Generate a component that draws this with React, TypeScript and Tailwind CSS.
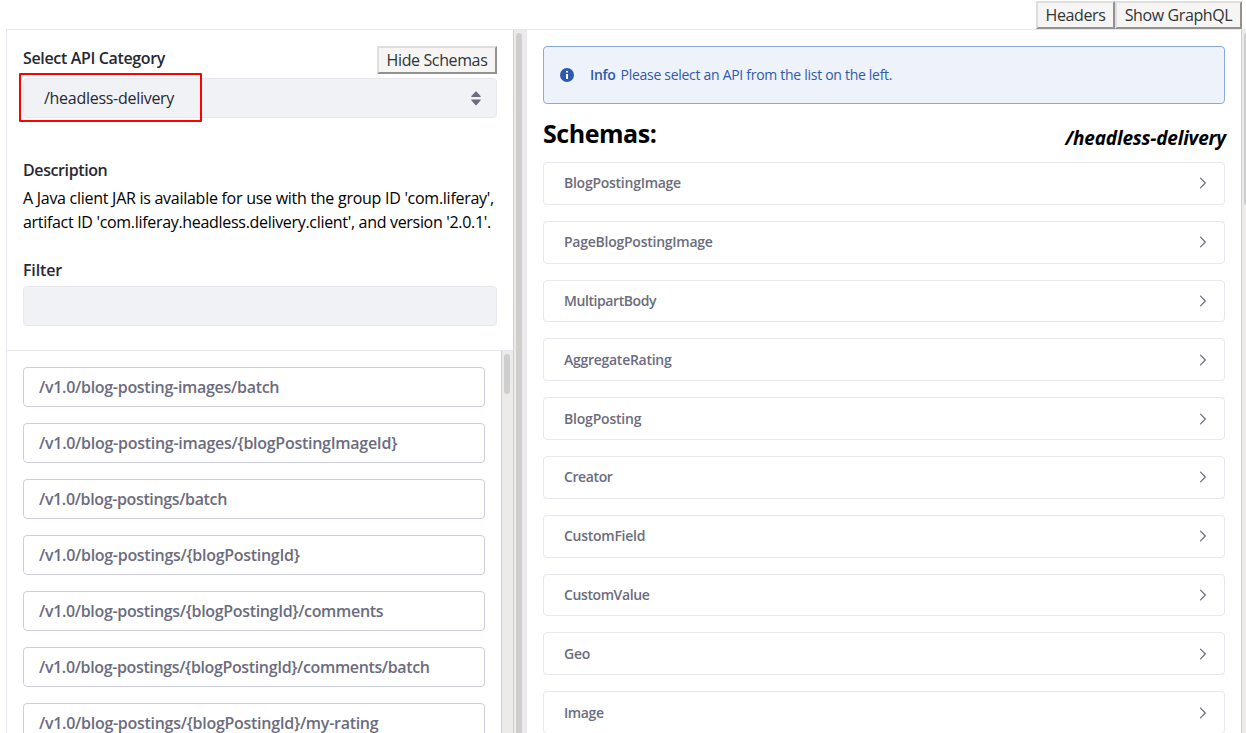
import type { ReactNode } from 'react';

const paths = [
  { name: '/v1.0/blog-posting-images/batch', tracking: 'tracking-[-0.29px]' },
  { name: '/v1.0/blog-posting-images/{blogPostingImageId}', tracking: 'tracking-[-0.27px]' },
  { name: '/v1.0/blog-postings/batch', tracking: 'tracking-[-0.36px]' },
  { name: '/v1.0/blog-postings/{blogPostingId}', tracking: 'tracking-[-0.29px]' },
  { name: '/v1.0/blog-postings/{blogPostingId}/comments', tracking: 'tracking-[-0.33px]' },
  { name: '/v1.0/blog-postings/{blogPostingId}/comments/batch', tracking: 'tracking-[-0.36px]' },
  { name: '/v1.0/blog-postings/{blogPostingId}/my-rating', tracking: 'tracking-[-0.28px]' },
];

const schemas = [
  { name: 'BlogPostingImage', tracking: 'tracking-[-0.26px]' },
  { name: 'PageBlogPostingImage', tracking: 'tracking-[-0.25px]' },
  { name: 'MultipartBody', tracking: 'tracking-[-0.42px]' },
  { name: 'AggregateRating', tracking: 'tracking-[-0.27px]' },
  { name: 'BlogPosting', tracking: 'tracking-[-0.2px]' },
  { name: 'Creator', tracking: 'tracking-[-0.4px]' },
  { name: 'CustomField', tracking: 'tracking-[-0.27px]' },
  { name: 'CustomValue', tracking: 'tracking-[-0.4px]' },
  { name: 'Geo', tracking: 'tracking-[-0.25px]' },
  { name: 'Image', tracking: 'tracking-[-0.4px]' },
];

function NativeButton({ children, width }: { children: ReactNode; width: string }) {
  return (
    <button
      className={`${width} flex h-7 shrink-0 items-center justify-center whitespace-nowrap border-2 border-t-[#dedede] border-r-[#929292] border-b-[#929292] border-l-[#dedede] bg-[#f6f5f4] text-base leading-6 tracking-[-0.38px] text-[#2e3436]`}
    >
      {children}
    </button>
  );
}

function Chevron() {
  return (
    <svg className="h-3 w-2" viewBox="0 0 8 12" fill="none" stroke="#6b6c7e" strokeWidth="1.2" strokeLinecap="round" strokeLinejoin="round">
      <path d="M1.5 1.2 6.3 6 1.5 10.8" />
    </svg>
  );
}

export default function App() {
  return (
    <div className="flex h-[733px] w-[1246px] flex-col overflow-hidden bg-white font-['Open_Sans','Noto_Sans',sans-serif] text-base text-black">
      <header className="flex h-[29px] shrink-0 justify-end pt-px pr-1">
        <NativeButton width="w-[79px]">Headers</NativeButton>
        <NativeButton width="w-[127px]">Show GraphQL</NativeButton>
      </header>

      <main className="ml-1.5 flex min-h-0 flex-1 border-t border-l border-[#e7e7ed]">
        <section className="flex w-[506px] shrink-0 flex-col">
          <div className="h-[321px] shrink-0 border-b border-[#e7e7ed] px-4 pt-4">
            <div className="flex h-8 justify-between">
              <h2 className="font-semibold leading-6 tracking-[-0.35px] text-[#272833]">Select API Category</h2>
              <NativeButton width="w-[120px]">Hide Schemas</NativeButton>
            </div>
            <div className="relative flex h-10 w-[474px] items-center justify-between rounded border border-[#e7e7ed] bg-[#f1f2f5] pr-[15px] pl-5 text-[#272833]">
              <span className="tracking-[-0.28px]">/headless-delivery</span>
              <svg className="h-[15px] w-[10px]" viewBox="0 0 10 15" fill="#6b6c7e">
                <path d="M.5 5.1c-.5.6-.3 1 .3 1h8.4c.6 0 .8-.4.3-1L5.6.8a.8.8 0 0 0-1.2 0zM.5 9.6c-.5-.6-.3-1 .3-1h8.4c.6 0 .8.4.3 1l-3.9 4.3a.8.8 0 0 1-1.2 0z" />
              </svg>
              <div className="absolute -top-1.5 -left-[5px] h-[49px] w-[183px] rounded-[1px] border-2 border-[#ff0000]" />
            </div>
            <h2 className="mt-10 font-semibold leading-6 tracking-[-0.4px] text-[#272833]">Description</h2>
            <p className="mt-1 whitespace-nowrap leading-6 tracking-[-0.27px]">
              A Java client JAR is available for use with the group ID 'com.liferay',
              <br />
              <span className="tracking-[-0.31px]">artifact ID 'com.liferay.headless.delivery.client', and version '2.0.1'.</span>
            </p>
            <h2 className="mt-6 font-semibold leading-6 tracking-[-0.15px] text-[#272833]">Filter</h2>
            <input aria-label="Filter" className="mt-1 block h-10 w-[474px] rounded border border-[#e7e7ed] bg-[#f1f2f5]" />
          </div>
          <div className="flex min-h-0 flex-1">
            <div className="flex w-[494px] shrink-0 flex-col gap-4 overflow-hidden px-4 pt-4">
              {paths.map(({ name, tracking }) => (
                <div
                  key={name}
                  className={`${tracking} flex h-10 shrink-0 items-center whitespace-nowrap rounded border border-[#cdced9] px-[15px] font-semibold text-[#6b6c7e]`}
                >
                  {name}
                </div>
              ))}
            </div>
            <div className="w-3 shrink-0 border-l border-[#cfcfce] bg-[#edebe9] pt-[3px] pl-0.5">
              <div className="h-10 w-1.5 rounded-full bg-[#cecece]" />
            </div>
          </div>
        </section>

        <div className="w-[13px] shrink-0 border-l border-[#cfcfce] bg-[#edebe9] pt-[3px] pl-0.5">
          <div className="h-full w-1.5 rounded-t-full bg-[#cecece]" />
        </div>

        <section className="flex w-[715px] shrink-0 flex-col border-l border-[#e7e7ed] px-4 pt-4">
          <div className="flex h-[58px] shrink-0 items-center rounded border border-[#89a7e0] bg-[#eef2fa] px-4 text-sm text-[#2e5aac]">
            <svg className="h-3.5 w-3.5" viewBox="0 0 14 14">
              <circle cx="7" cy="7" r="7" fill="#2e5aac" />
              <circle cx="7" cy="3.8" r="1" fill="white" />
              <path d="M6 6h2v5H6z" fill="white" />
            </svg>
            <span className="ml-4 font-semibold tracking-[-0.3px]">Info</span>
            <span className="ml-[5px] tracking-[-0.29px]">Please select an API from the list on the left.</span>
          </div>
          <div className="flex h-[58px] shrink-0 items-center justify-between">
            <h1 className="pt-0.5 text-[25px] font-bold tracking-[-0.45px]">Schemas:</h1>
            <em className="-mr-px pt-2.5 text-[19px] font-bold tracking-[-0.2px]">/headless-delivery</em>
          </div>
          <div className="flex flex-col gap-4">
            {schemas.map(({ name, tracking }) => (
              <div
                key={name}
                className={`${tracking} flex h-[42.8px] shrink-0 items-center justify-between rounded border border-[#e7e7ed] pr-[17px] pl-5 text-sm font-semibold text-[#6b6c7e]`}
              >
                {name}
                <Chevron />
              </div>
            ))}
          </div>
        </section>

        <div className="min-w-0 flex-1 border-l border-[#cfcfce] bg-[#edebe9] pt-[3px] pl-0.5">
          <div className="h-[172px] w-1.5 rounded-full bg-[#cecece]" />
        </div>
      </main>
    </div>
  );
}
